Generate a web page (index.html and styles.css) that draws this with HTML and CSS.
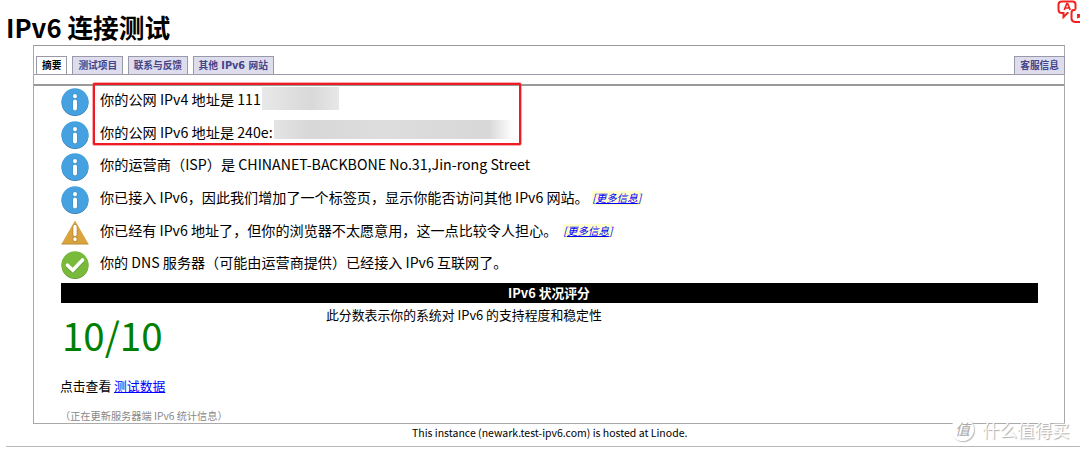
FILE: index.html
```
<!DOCTYPE html>
<html lang="zh-CN">
<head>
    <meta charset="UTF-8">
    <title>IPv6 连接测试</title>
    <link rel="stylesheet" href="styles.css">
</head>
<body>
    <svg class="translate" viewBox="0 0 28 26">
        <path d="M6 1.500h10.500q3 0 3 3v5M12.500 13h-1l-4 4v-4h-1.500q-3.500 0-3.500-3.500v-5q0-3 3.500-3"/>
        <path d="M19.500 10h-2q-2 0-2 3.500v5q0 3 3.500 3.500h9M21 15h3M21 17.500l3-1"/>
        <path class="letter" d="M8.200 10l2.600-6.500h.8l2.600 6.500M9.500 8h3.600"/>
    </svg>
    <h1>IPv6 连接测试</h1>

    <div class="box">
        <div class="tabs">
            <a class="tab active">摘要</a>
            <a class="tab">测试项目</a>
            <a class="tab">联系与反馈</a>
            <a class="tab">其他 IPv6 网站</a>
            <a class="tab help">客服信息</a>
        </div>
        <div class="content">
            <div class="row address">
                <svg class="icon" viewBox="0 0 28 28"><use href="#info"/></svg>
                <span>你的公网 IPv4 地址是 111</span><span class="mask v4"></span>
            </div>
            <div class="row address">
                <svg class="icon" viewBox="0 0 28 28"><use href="#info"/></svg>
                <span>你的公网 IPv6 地址是 240e:</span><span class="mask v6"></span>
            </div>
            <div class="row isp">
                <svg class="icon" viewBox="0 0 28 28"><use href="#info"/></svg>
                <span>你的运营商（ISP）是 CHINANET-BACKBONE No.31,Jin-rong Street</span>
            </div>
            <div class="row">
                <svg class="icon" viewBox="0 0 28 28"><use href="#info"/></svg>
                <span>你已接入 IPv6，因此我们增加了一个标签页，显示你能否访问其他 IPv6 网站。</span><a class="more">[<u>更多信息</u>]</a>
            </div>
            <div class="row">
                <svg class="icon" viewBox="0 0 28 28">
                    <path d="M14 1.500L27.500 25H.5z" fill="#dba33e"/>
                    <path d="M.5 25h27" stroke="#b98a35"/>
                    <path d="M14 7.500v8M14 20v.5" stroke="#b98a35" stroke-width="5" stroke-linecap="round"/>
                    <path d="M14 7.500v8M14 20v.5" stroke="#fff" stroke-width="3.400" stroke-linecap="round"/>
                </svg>
                <span>你已经有 IPv6 地址了，但你的浏览器不太愿意用，这一点比较令人担心。</span><a class="more wide">[<u>更多信息</u>]</a>
            </div>
            <div class="row">
                <svg class="icon" viewBox="0 0 28 28">
                    <circle cx="14" cy="14.500" r="13.500" fill="#5f9632"/>
                    <circle cx="14" cy="13.800" r="13.500" fill="#7aba3a"/>
                    <path d="M6.500 15l5.300 5L21.500 10" fill="none" stroke="#639c32" stroke-width="4"/>
                    <path d="M6.500 14.200l5.300 5L21.500 9" fill="none" stroke="#fff" stroke-width="3.600" stroke-linecap="round"/>
                </svg>
                <span>你的 DNS 服务器（可能由运营商提供）已经接入 IPv6 互联网了。</span>
            </div>
            <div class="frame"></div>

            <div class="bar">IPv6 状况评分</div>
            <div class="score-row">
                <div class="score">10/10</div>
                <div class="score-text">此分数表示你的系统对 IPv6 的支持程度和稳定性</div>
            </div>
            <div class="data">点击查看 <a>测试数据</a></div>
            <div class="stats">（正在更新服务器端 IPv6 统计信息）</div>
        </div>
    </div>
    <div class="footer">This instance (newark.test-ipv6.com) is hosted at Linode.</div>
    <div class="watermark"><span class="seal">值</span><span>什么值得买</span></div>

    <svg class="defs">
        <symbol id="info" viewBox="0 0 28 28">
            <circle cx="14" cy="14.500" r="13.500" fill="#3478ad"/>
            <circle cx="14" cy="13.800" r="13.500" fill="#45a1e0"/>
            <path d="M14 8v.3M14 13.500v7" stroke="#3b8cc5" stroke-width="5" stroke-linecap="round"/>
            <path d="M14 8v.3M14 13.500v7" stroke="#fff" stroke-width="4" stroke-linecap="round"/>
        </symbol>
    </svg>
</body>
</html>
```

FILE: styles.css
```
* { box-sizing: border-box; }
body { margin: 0; height: 452px; overflow: hidden; background: #fff; color: #000; font-family: "Noto Sans CJK SC", sans-serif; position: relative; }
h1 { margin: 0 0 0 6px; height: 45px; padding-top: 9px; font-size: 25.7px; line-height: 36px; font-weight: bold; }
.translate { position: absolute; left: 1056px; top: 0; width: 28px; height: 26px; fill: none; stroke: #f02222; stroke-width: 2; }
.letter { stroke-width: 1.7; }
.defs { position: absolute; width: 0; height: 0; }

.box { position: relative; margin-left: 33px; width: 1032px; height: 379px; border: 1px solid #aaa; border-top-color: #999; }
.tabs { display: flex; height: 29px; padding: 10px 0 0 2px; border-bottom: 1px solid #9a9aaa; }
.tab { height: 18px; margin-right: 5px; padding: 0 5px; border: 1px solid #99a; border-bottom: 0; background: #dde; color: #448; font: bold 9.7px/18px "DejaVu Sans", "Noto Sans CJK SC", sans-serif; white-space: nowrap; }
.tab:nth-child(3) { margin-left: -.5px; margin-right: 4.5px; }
.tab.active { background: #fff; color: #000; }
.tab.help { margin-left: auto; margin-right: -1px; }

.content { margin-top: 9px; border-top: 2px solid #999; padding: 0 27px 0 26.5px; }
.row { display: flex; height: 32.7px; font-size: 14.1px; line-height: 26px; white-space: nowrap; }
.row.isp, .row.address { font-size: 14.2px; }
.icon { width: 28px; height: 28px; margin: 2px 11.500px 0 0; flex: none; }
.more { margin-left: 3.5px; height: 14px; margin-top: 7px; background: #ffc; color: #00f; font-size: 10.5px; font-style: italic; line-height: 14px; }
.more.wide { margin-left: 6px; }
.mask { background: linear-gradient(90deg, #e8e8e8, #dedede 40%, #d9d9d9 65%, #e8e8e8); }
.mask.v4 { width: 77px; height: 23px; margin: 1px 0 0 1px; }
.mask.v6 { width: 239px; height: 19px; margin: 1px 0 0 1px; background: linear-gradient(90deg, #e4e4e4, #d8d8d8 15%, #dddddd 45%, #d8d8d8 90%, #fff); }
.frame { position: absolute; left: 59px; top: 37px; width: 428px; height: 62px; border: 2.5px solid #ed1c24; border-radius: 1px; box-shadow: 0 0 0 .5px #f45b61; }

.bar { width: 977px; height: 20px; margin-top: 1px; background: #000; color: #fff; text-align: center; font-size: 12.8px; font-weight: bold; line-height: 20px; }
.score-row { display: flex; height: 71px; }
.score { width: 265.5px; padding-left: 1.5px; color: #008000; font-size: 38.5px; line-height: 63px; }
.score-text { font-size: 12.87px; line-height: 24px; }
.data { height: 24px; font-size: 12.8px; line-height: 24px; }
.data, .stats { margin-left: -.5px; }
.data a { color: #00f; text-decoration: underline; }
.stats { margin-top: 9px; height: 18px; color: #888; font-size: 10.2px; line-height: 18px; }

.footer { margin-left: 6px; height: 23px; border-bottom: 1px solid #b8b8b8; padding-left: 406px; font-size: 10.5px; line-height: 17px; }
.watermark { position: absolute; left: 951px; top: 417px; display: flex; align-items: center; gap: 8px; color: #fff; font-size: 17.5px; line-height: 25px; text-shadow: 1px 1px 1px #aaa; }
.seal { width: 23px; height: 23px; border-radius: 50%; background: #fff; box-shadow: 1px 1px 1px #bbb; color: #aaa; font-size: 15px; font-style: italic; line-height: 22px; text-align: center; text-shadow: none; }
```
